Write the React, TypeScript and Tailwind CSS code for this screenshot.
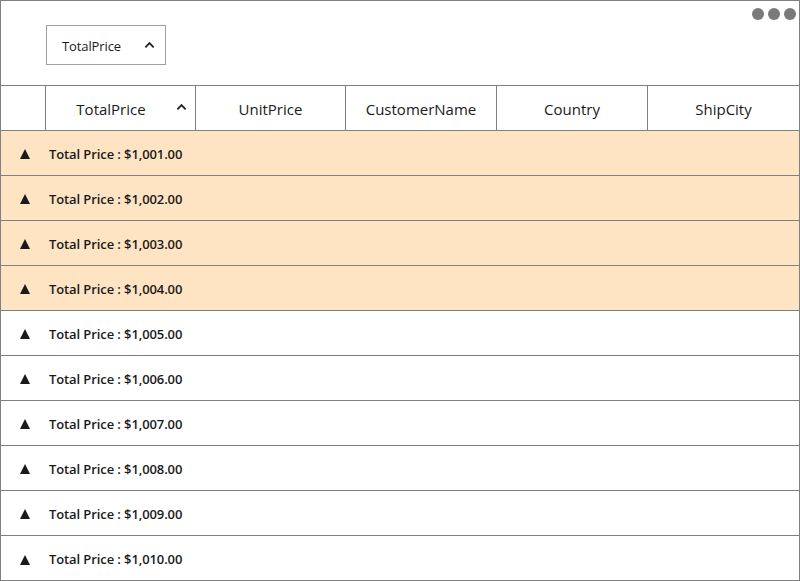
import React from 'react';

const columns = ['TotalPrice', 'UnitPrice', 'CustomerName', 'Country', 'ShipCity'];

const rows = Array.from({ length: 10 }, (_, i) => ({
  label: `Total Price : $1,0${String(i + 1).padStart(2, '0')}.00`,
  highlighted: i < 4,
}));

const Chevron = ({ className }: { className?: string }) => (
  <svg viewBox="0 0 12 8" className={className} fill="none">
    <path d="M1.5 6.5 L6 2 L10.5 6.5" stroke="#222" strokeWidth="2" />
  </svg>
);

export default function App() {
  return (
    <div
      className="relative w-[800px] h-[581px] border border-[#808080] bg-white text-[#1a1a1a] overflow-hidden"
      style={{ fontFamily: '"Open Sans", "Noto Sans", sans-serif' }}
    >
      <div className="absolute right-[3px] top-[7px] flex gap-[4px]">
        <span className="w-[12px] h-[12px] rounded-full bg-[#7a7a7a]" />
        <span className="w-[12px] h-[12px] rounded-full bg-[#7a7a7a]" />
        <span className="w-[12px] h-[12px] rounded-full bg-[#7a7a7a]" />
      </div>

      <div className="h-[85px] border-b border-[#808080] pt-[24px] pl-[45px]">
        <div className="w-[120px] h-[40px] border border-[#a0a0a0] flex items-center pl-[15px] pr-[10px] justify-between">
          <span className="text-[13px] tracking-[-0.1px] pt-[3px]">TotalPrice</span>
          <Chevron className="w-[11px] h-[8px]" />
        </div>
      </div>

      <div className="grid grid-cols-[45px_150px_150px_151px_151px_1fr] h-[45px] border-b border-[#808080]">
        <div className="border-r border-[#808080]" />
        {columns.map((c, i) => (
          <div
            key={c}
            className={`flex items-center text-[15px] pt-[2px] ${i < columns.length - 1 ? 'border-r border-[#808080]' : ''}`}
          >
            {i === 0 ? (
              <>
                <span className="flex-1 text-center">{c}</span>
                <Chevron className="w-[11px] h-[8px] mr-[8px] mb-[4px]" />
              </>
            ) : (
              <span className="flex-1 text-center">{c}</span>
            )}
          </div>
        ))}
      </div>

      {rows.map((r, i) => (
        <div
          key={i}
          className={`flex items-center h-[45px] pt-[3px] ${i < rows.length - 1 ? 'border-b border-[#808080]' : ''} ${r.highlighted ? 'bg-[#ffe4c4]' : 'bg-white'}`}
        >
          <div className="w-[48px] flex justify-center">
            <svg viewBox="0 0 10 10" className="w-[10px] h-[10px] mb-[1px]">
              <path d="M5 0 L10 10 L0 10 Z" fill="#1a1a1a" />
            </svg>
          </div>
          <span className="text-[13px] font-semibold tracking-[-0.1px]">{r.label}</span>
        </div>
      ))}
    </div>
  );
}
